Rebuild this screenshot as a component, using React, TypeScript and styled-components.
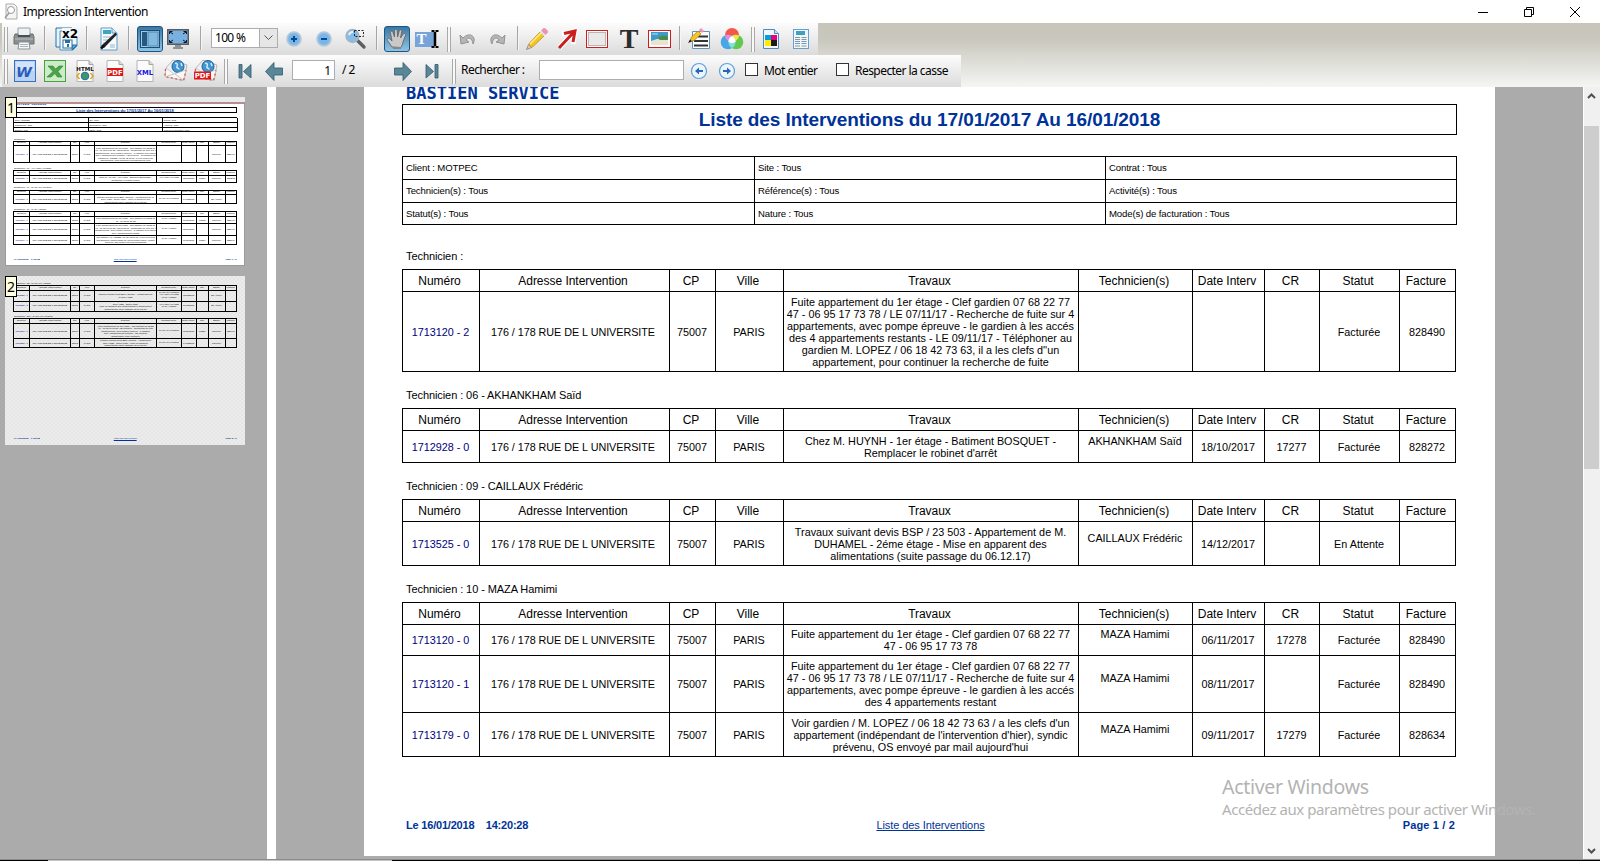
import React from "react";
import styled, { createGlobalStyle, css } from "styled-components";

const Global = createGlobalStyle`
  *, *::before, *::after { box-sizing: border-box; }
  body { margin: 0; background: #ababab; overflow: hidden; }
`;

const ui = `"Noto Sans", "Open Sans", sans-serif`;
const arial = `"Liberation Sans", Arial, sans-serif`;

/* ---------- window chrome ---------- */

const Window = styled.div`
  position: relative;
  width: 1600px;
  height: 861px;
  display: flex;
  flex-direction: column;
  overflow: hidden;
  font-family: ${ui};
  color: #000;
`;

const TitleBar = styled.header`
  height: 23px;
  flex: none;
  display: flex;
  align-items: center;
  background: #fff;
  padding: 0 2px 0 4px;
  font-size: 12px;
  letter-spacing: -0.5px;
`;

const TitleText = styled.span`
  margin-left: 5px;
  flex: 1;
  line-height: 22px;
  padding-top: 1px;
`;

const WindowButton = styled.div`
  width: 46px;
  height: 20px;
  display: flex;
  align-items: center;
  justify-content: center;
`;

const ToolArea = styled.div`
  height: 64px;
  flex: none;
  display: flex;
  flex-direction: column;
  align-items: flex-start;
  padding-left: 2px;
  background: linear-gradient(#c8c5ba 0, #c9c8be 26%, #f5f5f3 100%);
`;

const ToolRow = styled.div<{ $w: number }>`
  width: ${(p) => p.$w}px;
  height: 32px;
  display: flex;
  align-items: center;
  background: linear-gradient(#fcfcfc, #dbdbdb);
`;

const Item = styled.div<{ $gap: number; $w: number }>`
  flex: none;
  margin-left: ${(p) => p.$gap}px;
  width: ${(p) => p.$w}px;
  display: flex;
  align-items: center;
  justify-content: center;
  svg { display: block; flex: none; }
`;

const Separator = styled.i<{ $gap: number }>`
  flex: none;
  margin-left: ${(p) => p.$gap}px;
  width: 2px;
  height: 24px;
  margin-bottom: 2px;
  border-left: 1px solid #a5a5a5;
  border-right: 1px solid #f6f6f6;
`;

const Handle = styled.i<{ $gap: number }>`
  flex: none;
  margin-left: ${(p) => p.$gap}px;
  width: 4px;
  height: 25px;
  border: solid #a9a9a9;
  border-width: 0 1px;
  background: #f8f8f8;
`;

const Pressed = styled.div`
  width: 26px;
  height: 26px;
  border: 1px solid #1c557f;
  border-radius: 3px;
  background: linear-gradient(#3a78a4, #8fc4e6);
  display: flex;
  align-items: center;
  justify-content: center;
`;

const Combo = styled.div<{ $gap: number }>`
  margin-left: ${(p) => p.$gap}px;
  width: 67px;
  height: 20px;
  margin-bottom: 2px;
  border: 1px solid #abadb3;
  background: #fff;
  display: flex;
  font-size: 12px;
  line-height: 18px;
`;
const ComboValue = styled.span`
  flex: 1;
  padding-left: 3px;
  letter-spacing: -0.7px;
`;
const ComboArrow = styled.span`
  width: 19px;
  border: 1px solid #adadad;
  margin: -1px;
  background: #e6e6e6;
  display: flex;
  align-items: center;
  justify-content: center;
`;

const Field = styled.div<{ $gap: number; $w: number }>`
  flex: none;
  margin-left: ${(p) => p.$gap}px;
  margin-bottom: 2px;
  width: ${(p) => p.$w}px;
  height: 20px;
  border: 1px solid #abadb3;
  background: #fff;
  text-align: right;
  padding-right: 3px;
  font-size: 12px;
  line-height: 19px;
`;

const Label = styled.span<{ $gap: number; $w: number; $up?: number }>`
  flex: none;
  margin-left: ${(p) => p.$gap}px;
  width: ${(p) => p.$w}px;
  margin-bottom: ${(p) => p.$up ?? 2}px;
  font-size: 12px;
  line-height: 18px;
  white-space: nowrap;
  letter-spacing: -0.55px;
`;

const CheckBox = styled.i<{ $gap: number }>`
  flex: none;
  margin: 0 0 3px ${(p) => p.$gap}px;
  width: 13px;
  height: 13px;
  border: 1px solid #333;
  background: #fff;
`;

/* ---------- body ---------- */

const Body = styled.main`
  flex: none;
  height: 772px;
  display: flex;
  background: #ababab;
`;

const Thumbs = styled.aside`
  width: 267px;
  padding: 10px 5px 0;
  display: flex;
  flex-direction: column;
  gap: 10px;
`;

const Splitter = styled.div`
  width: 9px;
  background: #fff;
`;

const Viewer = styled.section`
  flex: 1;
  overflow: hidden;
  padding-left: 88px;
`;

const ViewerPage = styled.div`
  margin-top: -28px;
  width: 1131px;
`;

const hatch = `repeating-conic-gradient(#e6e6e6 0 25%, #ececec 0 50%) 0 0 / 4px 4px`;

const ThumbFrame = styled.div<{ $shade?: boolean }>`
  position: relative;
  width: 240px;
  height: 169px;
  overflow: hidden;
  ${(p) => p.$shade && css`background: ${hatch};`}
`;

const Shrink = styled.div`
  zoom: 0.2122;
  --line: 4.7px;
`;

const OutOfView = styled.div`
  position: absolute;
  inset: 0 0 auto 0;
  height: 5px;
  background: ${hatch};
`;

const InView = styled.div`
  position: absolute;
  inset: 5px 0 0 0;
  border: 1px solid #9b9b9b;
  border-top: 2px solid #b58f8f;
`;

const PageTag = styled.span`
  position: absolute;
  left: 0;
  top: 0;
  width: 12px;
  height: 21px;
  border: 1px solid #000;
  background: #ffffe1;
  font-size: 14px;
  line-height: 19px;
  text-align: center;
`;

const ScrollBar = styled.div`
  width: 17px;
  border-left: 1px solid #fff;
  background: #f0f0f0;
  display: flex;
  flex-direction: column;
  align-items: center;
  padding: 5px 1px 4px 0;
  svg { display: block; flex: none; }
`;
const ScrollThumb = styled.div`
  width: 15px;
  height: 343px;
  margin-top: 26px;
  margin-bottom: auto;
  background: #cdcdcd;
`;

const BottomEdge = styled.footer`
  flex: none;
  height: 2px;
  border-top: 1px solid #8c8c8c;
  background: linear-gradient(90deg, #000 48px, #c4c4c4 48px 392px, #000 392px);
`;

/* ---------- report ---------- */

const Sheet = styled.article<{ $clear?: boolean }>`
  width: 1131px;
  height: 797px;
  padding: 0 38px;
  background: ${(p) => (p.$clear ? "transparent" : "#fff")};
  font-family: ${arial};
  display: flex;
  flex-direction: column;
`;

const Company = styled.div`
  height: 45px;
  flex: none;
  padding: 24px 0 0 4px;
  font: bold 17px/20px "DejaVu Sans Mono", monospace;
  color: #039;
  white-space: nowrap;
`;

const Heading = styled.h1`
  flex: none;
  margin: 0 0 21px;
  width: 1055px;
  height: 31px;
  border: 1px solid #000;
  color: #039;
  font-size: 19px;
  line-height: 29px;
  text-align: center;
  letter-spacing: -0.09px;
`;

const Filters = styled.div`
  flex: none;
  width: 1055px;
  display: grid;
  grid-template-columns: 352px 351px 351px;
  grid-template-rows: 23px 23px 22px;
  border: solid #000;
  border-width: 1px 0 0 1px;
  margin-top: calc(1px - var(--line, 1px));
  margin-bottom: 25px;
`;
const Filter = styled.div`
  border: solid #000;
  border-width: 0 1px 1px 0;
  padding-left: 3px;
  font-size: 9.6px;
  letter-spacing: -0.13px;
  line-height: 22px;
  white-space: nowrap;
`;

const Group = styled.section`
  flex: none;
  padding-bottom: 17px;
`;

const GroupLabel = styled.div`
  height: 19px;
  padding-left: 4px;
  font-size: 11px;
  line-height: 13px;
  letter-spacing: -0.08px;
  white-space: nowrap;
`;

const Grid = styled.div`
  width: 1054px;
  border: solid #000;
  border-width: 1px 0 0 1px;
  margin-top: calc(1px - var(--line, 1px));
`;

const Row = styled.div<{ $h: number }>`
  display: grid;
  grid-template-columns: 77px 190px 46px 68px 295px 114px 72px 55px 80px 56px;
  height: ${(p) => p.$h}px;
`;

const Cell = styled.div<{ $head?: boolean; $blue?: boolean; $raised?: boolean; $tight?: boolean }>`
  border: solid #000;
  border-width: 0 1px 1px 0;
  display: flex;
  align-items: center;
  justify-content: center;
  text-align: center;
  white-space: pre;
  font-size: 10.8px;
  line-height: 12px;
  padding-right: 1px;
  ${(p) => p.$head && css`font-size: 12px; padding-top: 1px; padding-right: 3px; letter-spacing: -0.03px;`}
  ${(p) => p.$blue && css`color: #000080;`}
  ${(p) => p.$raised && css`padding-bottom: 12px;`}
  ${(p) => p.$tight && css`letter-spacing: -0.04px; padding-right: 3px;`}
`;

const SheetFooter = styled.div`
  flex: none;
  width: 1055px;
  margin-top: auto;
  height: 38px;
  padding: 0 2px 0 4px;
  display: grid;
  grid-template-columns: 1fr 1fr 1fr;
  color: #039;
  font-size: 11px;
  line-height: 14px;
  font-weight: bold;
  white-space: pre;
`;
const FootLeft = styled.span`
  letter-spacing: -0.2px;
`;
const FootCenter = styled.span`
  text-align: center;
  font-weight: normal;
  text-decoration: underline;
  letter-spacing: -0.08px;
`;
const FootRight = styled.span`
  text-align: right;
  letter-spacing: 0.15px;
`;

const Watermark = styled.div`
  position: absolute;
  left: 1222px;
  top: 773px;
  color: #b3b3b3;
  white-space: nowrap;
  pointer-events: none;
`;
const WatermarkTitle = styled.div`
  font-size: 19.5px;
  line-height: 27px;
  letter-spacing: -0.3px;
`;
const WatermarkText = styled.div`
  font-size: 15px;
  line-height: 18px;
  letter-spacing: -0.43px;
`;

type Intervention = [string, string, string, string, string, string, number];
interface TechGroup {
  name: string;
  rows: Intervention[];
}

const page1: TechGroup[] = [
  {
    name: "Technicien :",
    rows: [
      ["1713120 - 2", "Fuite appartement du 1er étage - Clef gardien 07 68 22 77\n47 - 06 95 17 73 78 / LE 07/11/17 - Recherche de fuite sur 4\nappartements, avec pompe épreuve - le gardien à les accés\ndes 4 appartements restants - LE 09/11/17 - Téléphoner au\ngardien M. LOPEZ / 06 18 42 73 63, il a les clefs d''un\nappartement, pour continuer la recherche de fuite", "", "", "", "Facturée|828490", 80],
    ],
  },
  {
    name: "Technicien : 06 - AKHANKHAM Saïd",
    rows: [
      ["1712928 - 0", "Chez M. HUYNH - 1er étage - Batiment BOSQUET -\nRemplacer le robinet d'arrêt", "AKHANKHAM Saïd", "18/10/2017", "17277", "Facturée|828272", 32],
    ],
  },
  {
    name: "Technicien : 09 - CAILLAUX Frédéric",
    rows: [
      ["1713525 - 0", "Travaux suivant devis BSP / 23 503 - Appartement de M.\nDUHAMEL - 2éme étage - Mise en apparent des\nalimentations (suite passage du 06.12.17)", "CAILLAUX Frédéric", "14/12/2017", "", "En Attente|", 44],
    ],
  },
  {
    name: "Technicien : 10 - MAZA Hamimi",
    rows: [
      ["1713120 - 0", "Fuite appartement du 1er étage - Clef gardien 07 68 22 77\n47 - 06 95 17 73 78", "MAZA Hamimi", "06/11/2017", "17278", "Facturée|828490", 31],
      ["1713120 - 1", "Fuite appartement du 1er étage - Clef gardien 07 68 22 77\n47 - 06 95 17 73 78 / LE 07/11/17 - Recherche de fuite sur 4\nappartements, avec pompe épreuve - le gardien à les accés\ndes 4 appartements restant", "MAZA Hamimi", "08/11/2017", "", "Facturée|828490", 57],
      ["1713179 - 0", "Voir gardien / M. LOPEZ / 06 18 42 73 63 / a les clefs d'un\nappartement (indépendant de l'intervention d'hier), syndic\nprévenu, OS envoyé par mail aujourd'hui", "MAZA Hamimi", "09/11/2017", "17279", "Facturée|828634", 44],
    ],
  },
];

const page2: TechGroup[] = [
  {
    name: "Technicien : 12 - CAILLAUX Hamimi",
    rows: [
      ["1713525 - 1", "Travaux suivant devis BSP / 23 503 - Appartement de\nM. DUHAMEL", "CAILLAUX Frédéric\nAKHANKHAM Saïd\nMAZA Hamimi", "18/12/2017", "", "En Attente|", 42],
      ["1713525 - 2", "Travaux suivant devis BSP / 23 503 - Appartement\nDUHAMEL - 2éme étage\nMise en apparent des alimentations et appartement\nalimentations (suite passage du 06.12.17)", "CAILLAUX Frédéric\nAKHANKHAM Saïd\nMAZA Hamimi", "19/12/2017", "", "En Attente|", 57],
    ],
  },
  {
    name: "Technicien : 206 - CAILLAUX Frédéric",
    rows: [
      ["1713120 - 3", "Fuite appartement du 1er étage - Clef gardien 07 68 22\n47 - 06 95 17 73 78 / LE 07/11/17 - Recherche de fuite\nappartements, avec pompe épreuve - le gardien\ndes 4 appartements restants - LE 09/11/17\nappartement, pour continuer", "CAILLAUX Frédéric", "09/11/2017", "17280", "Facturée|828490", 70],
      ["1713525 - 3", "Travaux suivant devis BSP / 23 503 - Appartement\nDUHAMEL - 2éme étage - Mise en apparent\nalimentations (suite passage du 06.12.17)", "CAILLAUX Frédéric", "14/12/2017", "", "Facturée|", 44],
    ],
  },
];

const headers = ["Numéro", "Adresse Intervention", "CP", "Ville", "Travaux", "Technicien(s)", "Date Interv", "CR", "Statut", "Facture"];
const filters = ["Client : MOTPEC", "Site : Tous", "Contrat : Tous", "Technicien(s) : Tous", "Référence(s) : Tous", "Activité(s) : Tous", "Statut(s) : Tous", "Nature : Tous", "Mode(s) de facturation : Tous"];

function Groups({ groups }: { groups: TechGroup[] }) {
  return (
    <>
      {groups.map((g) => (
        <Group key={g.name}>
          <GroupLabel>{g.name}</GroupLabel>
          <Grid>
            <Row $h={22}>
              {headers.map((h) => <Cell key={h} $head>{h}</Cell>)}
            </Row>
            {g.rows.map(([num, work, tech, date, cr, state, h]) => {
              const [statut, facture] = state.split("|");
              return (
                <Row key={num} $h={h}>
                  <Cell $blue>{num}</Cell>
                  <Cell $tight>176 / 178 RUE DE L UNIVERSITE</Cell>
                  <Cell>75007</Cell>
                  <Cell>PARIS</Cell>
                  <Cell>{work}</Cell>
                  <Cell $raised>{tech}</Cell>
                  <Cell>{date}</Cell>
                  <Cell>{cr}</Cell>
                  <Cell>{statut}</Cell>
                  <Cell>{facture}</Cell>
                </Row>
              );
            })}
          </Grid>
        </Group>
      ))}
    </>
  );
}

function FooterLine({ page }: { page: number }) {
  return (
    <SheetFooter>
      <FootLeft>{"Le 16/01/2018    14:20:28"}</FootLeft>
      <FootCenter>Liste des Interventions</FootCenter>
      <FootRight>Page {page} / 2</FootRight>
    </SheetFooter>
  );
}

function FirstPage() {
  return (
    <Sheet>
      <Company>BASTIEN SERVICE</Company>
      <Heading>Liste des Interventions du 17/01/2017 Au 16/01/2018</Heading>
      <Filters>
        {filters.map((f) => <Filter key={f}>{f}</Filter>)}
      </Filters>
      <Groups groups={page1} />
      <FooterLine page={1} />
    </Sheet>
  );
}

const SecondTop = styled.div`
  height: 27px;
  flex: none;
`;

function SecondPage() {
  return (
    <Sheet $clear>
      <SecondTop />
      <Groups groups={page2} />
      <FooterLine page={2} />
    </Sheet>
  );
}

/* ---------- icons ---------- */

const Svg = ({ w, h, children }: { w: number; h: number; children: React.ReactNode }) => (
  <svg width={w} height={h} viewBox={`0 0 ${w} ${h}`} fill="none">{children}</svg>
);

const SvgText = styled.text<{ $size: number; $serif?: boolean; $italic?: boolean }>`
  font-family: ${(p) => (p.$serif ? `"Liberation Serif", serif` : `"DejaVu Sans", sans-serif`)};
  font-weight: bold;
  font-size: ${(p) => p.$size}px;
  font-style: ${(p) => (p.$italic ? "italic" : "normal")};
`;

const Printer = () => (
  <Svg w={24} h={24}>
    <path d="M6 1h12v8H6z" fill="#eef1f3" stroke="#9aa0a3" />
    <path d="M3 7h3v2h12V7h3l1 3v7H2v-7z" fill="#8b9093" stroke="#6b7073" />
    <path d="M6 8h12v2H6z" fill="#4b5053" />
    <path d="M3 12h18" stroke="#b9bec1" />
    <path d="M7 15h10l1 7H6z" fill="#f7f9fa" stroke="#8b9093" />
    <path d="M8 17.500h8M8 19.500h8" stroke="#a4b4b8" />
  </Svg>
);
const CopyX2 = () => (
  <Svg w={24} h={24}>
    <path d="M1 1h16v19H1z" fill="#e8f3fb" stroke="#2473a8" />
    <path d="M5 4h17v15l-4 4H5z" fill="#eef6fc" stroke="#4a90c0" />
    <path d="M22 18l-5 5v-5z" fill="#5aa7da" stroke="#2473a8" />
    <rect x="7" y="1" width="16" height="9" fill="#f3f6f8" />
    <SvgText $size={12} x="7" y="11" fill="#000">x2</SvgText>
    <rect x="8" y="13" width="9" height="8" fill="#fff" stroke="#2a6fa0" />
    <path d="M10 13h5v3h-5zM12 17h2v3h-2z" fill="#2a6fa0" />
  </Svg>
);
const EditPage = () => (
  <Svg w={22} h={24}>
    <path d="M3 1h11l5 5v17H3z" fill="#f5fafd" stroke="#5b9bc9" />
    <path d="M14 1v5h5" fill="#cfe4f3" stroke="#5b9bc9" />
    <path d="M5 3h8v4H5z" fill="#3fa3c4" />
    <path d="M5 10h10M5 13h7M5 16h4M12 18h5M12 20h5" stroke="#9ab4c4" />
    <path d="M3 19L17.500 5.500l1.500 2L6 21z" fill="#222" />
    <path d="M3 21.500l3-3" stroke="#111" strokeWidth="2.500" />
  </Svg>
);
const PanelIcon = () => (
  <Svg w={20} h={18}>
    <rect x=".5" y=".5" width="19" height="17" fill="#9fcbea" stroke="#1a4c74" />
    <rect x="2" y="2" width="5" height="14" fill="#27587f" />
    <rect x="8" y="2" width="10" height="14" fill="#84b8dc" stroke="#4e8ab3" />
  </Svg>
);
const ScreenIcon = () => (
  <Svg w={22} h={24}>
    <rect x="0" y="2" width="22" height="16" fill="#565e64" />
    <rect x="1.500" y="3.500" width="19" height="13" fill="#78b0e0" />
    <path d="M2.500 7V4.500h3M16.500 4.500h3V7M19.500 13v2.500h-3M5.500 15.500h-3V13M3 5l3 2M19 5l-3 2M3 15l3-2M19 15l-3-2" stroke="#112" />
    <path d="M8 18h6v3H8zM6 20h10v2H6z" fill="#8c9296" />
  </Svg>
);
const Round = ({ minus }: { minus?: boolean }) => (
  <Svg w={16} h={16}>
    <circle cx="8" cy="8" r="7" fill="#8cc0ea" stroke="#b7c8d6" strokeWidth="1.600" />
    <circle cx="8" cy="8" r="5.600" fill="#78b6ea" />
    <path d={minus ? "M5 8h6" : "M5 8h6M8 5v6"} stroke="#0c4a8e" strokeWidth="2" />
  </Svg>
);
const Loupe = () => (
  <Svg w={22} h={22}>
    <path d="M12 12l7 7" stroke="#5c5f62" strokeWidth="3.400" strokeLinecap="round" />
    <circle cx="7.500" cy="8" r="6.200" fill="#86bce8" stroke="#a4b6c4" strokeWidth="2" />
    <path d="M4 7a4 4 0 014-3" stroke="#e4f3fd" strokeWidth="2" />
    <rect x="9.500" y="2.500" width="9" height="6" stroke="#222" strokeDasharray="2 1.500" />
  </Svg>
);
const Hand = () => (
  <Svg w={22} h={22}>
    <path d="M6 19L1.500 12.500c-1-2 1-3 2.500-1.500l2 2L4.500 5c-.3-2 2-2.400 2.500-.6L8.500 9V3c0-2 2.600-2 2.800 0l.3 6 1.600-6c.6-1.800 2.800-1.200 2.500.6L14.500 10l2.700-4c1-1.400 3-.4 2.300 1.300L17 14c-.4 2-.9 4-2 5.500z" fill="#c9c9c9" stroke="#666" strokeWidth=".9" />
    <path d="M7 20h8" stroke="#888" strokeWidth="2" />
  </Svg>
);
const TextSelect = () => (
  <Svg w={26} h={22}>
    <rect x="0" y="4" width="20" height="15" fill="#76a4d8" />
    <SvgText $size={15} $serif x="1.5" y="16" fill="#fff">T</SvgText>
    <path d="M16.500 3h3M20.500 3h3M16.500 19h3M20.500 19h3" stroke="#000" strokeWidth="2" />
    <path d="M20 4v14" stroke="#000" strokeWidth="2.500" />
  </Svg>
);
const Undo = ({ flip }: { flip?: boolean }) => (
  <svg width="20" height="16" viewBox="0 0 20 16" fill="none">
    <path transform={flip ? "matrix(-1 0 0 1 20 0)" : undefined} d="M2 4l1 9 8-2-3-2c2-3 6-3 7 4 4-7-3-13-10-6z" fill="#b6b6b6" stroke="#929292" />
  </svg>
);
const Pencil = () => (
  <Svg w={24} h={24}>
    <path d="M2 22l2.500-6L15 5l4 4L8 19.500z" fill="#f7c51d" stroke="#b98b25" strokeWidth=".8" />
    <path d="M5 17L16 6" stroke="#fff08a" strokeWidth="1.500" />
    <path d="M16.500 3.500l2-2c1-1 5 2.500 4 4l-2 2z" fill="#f48fb6" stroke="#d98aa8" strokeWidth=".6" />
    <path d="M15.500 4.500l4 4" stroke="#e0e0e0" strokeWidth="2" />
    <path d="M1.500 22.500l2-5 3 3z" fill="#e9c9a0" stroke="#777" strokeWidth=".6" />
  </Svg>
);
const RedArrow = () => (
  <Svg w={22} h={22}>
    <path d="M2 20L15 6M5 6l13-3-2 13" stroke="#fff" strokeWidth="5" />
    <path d="M2 20L16 5M7 5.500l11-2.500-2 11" stroke="#c9201f" strokeWidth="3" />
  </Svg>
);
const RedRect = () => (
  <Svg w={24} h={22}>
    <rect x="1.500" y="2.500" width="21" height="17" stroke="#c9201f" />
    <rect x="2.500" y="3.500" width="19" height="15" stroke="#fff" />
    <rect x="3.500" y="4.500" width="17" height="13" fill="#e9e9e9" stroke="#b8b8b8" />
  </Svg>
);
const BigT = () => (
  <Svg w={20} h={32}>
    <SvgText $size={28} $serif x="10" y="25" textAnchor="middle" fill="#2c2c2c">T</SvgText>
  </Svg>
);
const Picture = () => (
  <Svg w={25} h={22}>
    <rect x="1.500" y="2.500" width="22" height="17" fill="#fff" stroke="#c9201f" />
    <rect x="4" y="4" width="17" height="13" fill="#3c9bcd" />
    <path d="M4 13l6-2 11 1v5H4z" fill="#e9e4cf" />
    <path d="M11 10c3-3 7-3 10-1v3h-8z" fill="#4c8b49" />
    <path d="M5 6h6" stroke="#bfe2f3" />
  </Svg>
);
const ListPencil = () => (
  <Svg w={24} h={24}>
    <path d="M4.500 4.500h17v17h-17z" fill="#fff" stroke="#5e94c0" />
    <path d="M10 9.500h10M6 14h14M6 18.500h14" stroke="#333" strokeWidth="2" />
    <path d="M2 14l1.500-4L10 4l3 3-7 6.500z" fill="#f7c51d" stroke="#a8832a" strokeWidth=".8" />
    <path d="M11 3l2-2 3 3-2 2z" fill="#f48fb6" />
    <path d="M0 16l2-3.500 2 2z" fill="#222" />
  </Svg>
);
const Rgb = () => (
  <Svg w={24} h={24}>
    <circle cx="12" cy="8" r="7" fill="#f2594b" />
    <circle cx="8" cy="15" r="7.300" fill="#46a6e6" />
    <circle cx="16" cy="15" r="7.300" fill="#62c94f" />
    <path d="M5 8.500A7.500 7.500 0 0112 9a8 8 0 00-3.500 5C6.500 13 5 11 5 8.500z" fill="#e58be0" />
    <path d="M19 8.500A7.500 7.500 0 0012 9a8 8 0 013.500 5c2-1 3.500-3 3.500-5.500z" fill="#f5e24b" />
    <path d="M12 21a7 7 0 003.500-6 7 7 0 01-7 0A7 7 0 0012 21z" fill="#7fe0e0" />
    <path d="M12 9a7 7 0 013.700 6 7 7 0 01-7.400 0A7 7 0 0112 9z" fill="#fff" />
  </Svg>
);
const Cmyk = () => (
  <Svg w={18} h={22}>
    <path d="M1.500 1.500h11l4 4v15h-15z" fill="#f1f7fb" stroke="#4b8cc0" />
    <path d="M12.500 1.500v4h4" fill="#cde" stroke="#4b8cc0" />
    <rect x="3" y="7" width="6" height="6" fill="#00a0e0" />
    <rect x="9" y="7" width="6" height="6" fill="#e5007d" />
    <rect x="3" y="12" width="6" height="6" fill="#ffec00" />
    <rect x="9" y="12" width="6" height="6" fill="#1b1b1b" />
  </Svg>
);
const DocPreview = () => (
  <Svg w={18} h={22}>
    <rect x="1.500" y="1.500" width="15" height="19" fill="#eef6fb" stroke="#6a9fca" />
    <path d="M4 3h9v4H4z" fill="#3ba0cc" />
    <path d="M6 6h5v1H6z" fill="#5a9a4a" />
    <path d="M3 9.500h5M3 11.500h5M3 13.500h5M9.500 9.500h5M9.500 11.500h5M9.500 13.500h5M3 15.500h5M9.500 15.500h5M3 18h5M9.500 18h5" stroke="#8297a5" />
  </Svg>
);
const Word = () => (
  <Svg w={22} h={23}>
    <rect x=".5" y=".5" width="21" height="21" fill="#b8d2f4" stroke="#3a6fc0" />
    <rect x="2" y="2" width="18" height="9" fill="#e2eefc" opacity=".6" />
    <SvgText $size={14.5} $italic x="2" y="16.5" fill="#2a5db8">W</SvgText>
  </Svg>
);
const Excel = () => (
  <Svg w={22} h={23}>
    <rect x=".5" y=".5" width="21" height="21" fill="#cdebc9" stroke="#46a23f" />
    <path d="M4 6h5l2.500 3L15 6h4l-5 5.500 4 5.500h-4.500L11 13.500 7 17H3l6-5.500z" fill="#4ba547" stroke="#2a7f30" strokeWidth=".6" />
  </Svg>
);
const FileIcon = ({ label, color, band }: { label: string; color: string; band?: string }) => (
  <Svg w={18} h={23}>
    <path d="M1 .5h12l4 4v17H1z" fill="#fbfbfb" stroke="#b4b4b4" />
    <path d="M13 .5v4h4" fill="#d8d8d8" stroke="#a5a5a5" />
    {band && <rect x="1" y="8" width="16" height="8" fill={band} />}
    {label === "HTML" && (
      <g>
        <circle cx="9" cy="16" r="3.800" fill="#3a9a60" stroke="#2468b0" />
        <path d="M3.500 13l-2.500 3 2.500 3M14.500 13l2.500 3-2.500 3" stroke="#d9a520" strokeWidth="1.500" />
      </g>
    )}
    <SvgText $size={label === "HTML" ? 5.5 : 6.8} x="9" y={label === "HTML" ? 10.5 : 14.5} textAnchor="middle" fill={color}>{label}</SvgText>
  </Svg>
);
const Mail = ({ pdf }: { pdf?: boolean }) => (
  <Svg w={24} h={24}>
    <path d="M2 9L9 1l14 5-3 15L1 17z" fill="#eef2f5" stroke="#aaa" strokeWidth=".8" />
    <circle cx="14" cy="7.500" r="6" fill="#4295cf" stroke="#1d5c94" />
    <path d="M11 4.500c2-1 3 1 2 3s2 1 2 3M17 4l1 3" stroke="#d2ecfa" strokeWidth="1.500" />
    <path d="M2 9l8 6 12-4-2 10.500L1 17.500z" fill="#f8f8f8" stroke="#b0b0b0" strokeWidth=".6" />
    <path d="M1.500 10L1 17.500l18.500 4 2.500-10" stroke="#d8625a" strokeWidth="1.400" strokeDasharray="2 2.500" />
    <path d="M10 15l-8 2.500M11 15l8 6" stroke="#c4c4c4" />
    {pdf && (
      <g>
        <rect x="0" y="12.500" width="17" height="8" fill="#e01515" />
        <SvgText $size={7} x="8.5" y="19.1" textAnchor="middle" fill="#fff">PDF</SvgText>
      </g>
    )}
  </Svg>
);
const Nav = ({ dir, edge }: { dir: "l" | "r"; edge?: boolean }) => (
  <svg width="18" height="20" viewBox="0 0 18 20">
    <g transform={dir === "l" ? "matrix(-1 0 0 1 18 0)" : undefined} fill="#5a8698" stroke="#2f5b6a" strokeWidth=".8">
      {edge ? <path d="M3 3.500l7.500 7L3 17zM12 3.500h3V17h-3z" /> : <path d="M.5 7H9V1.500L17.500 10.500 9 19.500V14H.5z" />}
    </g>
  </svg>
);
const CircleArrow = ({ back }: { back?: boolean }) => (
  <Svg w={18} h={18}>
    <circle cx="9" cy="9" r="7.500" fill="#eaf5fd" stroke="#5f9fd3" strokeWidth="1.200" />
    <path transform={back ? "matrix(-1 0 0 1 18 0)" : undefined} d="M5 8h4V5.500L13 9l-4 3.500V10H5z" fill="#2468b4" />
  </Svg>
);
const Chevron = ({ d }: { d: string }) => (
  <Svg w={9} h={8}><path d={d} stroke="#505050" strokeWidth="2" /></Svg>
);

/* ---------- page ---------- */

export default function App() {
  return (
    <Window>
      <Global />
      <TitleBar>
        <Svg w={14} h={17}>
          <path d="M2 1h8l3 3v12H2z" fill="#f6f6f6" stroke="#aaa" />
          <circle cx="7" cy="7" r="3.500" fill="#fff" stroke="#999" />
          <path d="M5 10l-4 5" stroke="#999" strokeWidth="1.500" />
        </Svg>
        <TitleText>Impression Intervention</TitleText>
        <WindowButton><Svg w={10} h={10}><path d="M0 5.500h10" stroke="#000" /></Svg></WindowButton>
        <WindowButton>
          <Svg w={10} h={10}><path d="M.5 2.500h7v7h-7zM2.500 2.500v-2h7v7h-2" stroke="#000" /></Svg>
        </WindowButton>
        <WindowButton><Svg w={10} h={10}><path d="M0 0l10 10M10 0L0 10" stroke="#000" /></Svg></WindowButton>
      </TitleBar>

      <ToolArea>
        <ToolRow $w={816}>
          <Handle $gap={2} />
          <Item $gap={4} $w={24}><Printer /></Item>
          <Separator $gap={8} />
          <Item $gap={9} $w={24}><CopyX2 /></Item>
          <Separator $gap={7} />
          <Item $gap={10} $w={22}><EditPage /></Item>
          <Separator $gap={8} />
          <Item $gap={7} $w={26}><Pressed><PanelIcon /></Pressed></Item>
          <Item $gap={4} $w={22}><ScreenIcon /></Item>
          <Separator $gap={11} />
          <Combo $gap={9}>
            <ComboValue>100 %</ComboValue>
            <ComboArrow><Svg w={9} h={6}><path d="M.5.5l4 4 4-4" stroke="#555" /></Svg></ComboArrow>
          </Combo>
          <Item $gap={8} $w={16}><Round /></Item>
          <Item $gap={14} $w={16}><Round minus /></Item>
          <Item $gap={13} $w={22}><Loupe /></Item>
          <Separator $gap={9} />
          <Item $gap={6} $w={26}><Pressed><Hand /></Pressed></Item>
          <Item $gap={5} $w={26}><TextSelect /></Item>
          <Handle $gap={6} />
          <Item $gap={7} $w={20}><Undo /></Item>
          <Item $gap={9} $w={20}><Undo flip /></Item>
          <Separator $gap={10} />
          <Item $gap={6} $w={24}><Pencil /></Item>
          <Item $gap={8} $w={22}><RedArrow /></Item>
          <Item $gap={6} $w={24}><RedRect /></Item>
          <Item $gap={10} $w={20}><BigT /></Item>
          <Item $gap={8} $w={25}><Picture /></Item>
          <Separator $gap={7} />
          <Item $gap={7} $w={24}><ListPencil /></Item>
          <Item $gap={8} $w={24}><Rgb /></Item>
          <Handle $gap={7} />
          <Item $gap={7} $w={18}><Cmyk /></Item>
          <Item $gap={12} $w={18}><DocPreview /></Item>
        </ToolRow>
        <ToolRow $w={959}>
          <Handle $gap={2} />
          <Item $gap={6} $w={22}><Word /></Item>
          <Item $gap={8} $w={22}><Excel /></Item>
          <Item $gap={10} $w={18}><FileIcon label="HTML" color="#111" /></Item>
          <Item $gap={12} $w={18}><FileIcon label="PDF" color="#fff" band="#e01515" /></Item>
          <Item $gap={12} $w={18}><FileIcon label="XML" color="#1717e0" /></Item>
          <Item $gap={10} $w={24}><Mail /></Item>
          <Item $gap={6} $w={24}><Mail pdf /></Item>
          <Handle $gap={6} />
          <Item $gap={8} $w={18}><Nav dir="l" edge /></Item>
          <Item $gap={11} $w={18}><Nav dir="l" /></Item>
          <Field $gap={9} $w={43}>1</Field>
          <Label $gap={7} $w={20}>/ 2</Label>
          <Item $gap={32} $w={18}><Nav dir="r" /></Item>
          <Item $gap={11} $w={18}><Nav dir="r" edge /></Item>
          <Handle $gap={11} />
          <Label $gap={5} $w={66} $up={3}>Rechercher :</Label>
          <Field $gap={12} $w={145} />
          <Item $gap={6} $w={18}><CircleArrow back /></Item>
          <Item $gap={10} $w={18}><CircleArrow /></Item>
          <CheckBox $gap={9} />
          <Label $gap={6} $w={60} $up={1}>Mot entier</Label>
          <CheckBox $gap={12} />
          <Label $gap={6} $w={100} $up={1}>Respecter la casse</Label>
        </ToolRow>
      </ToolArea>

      <Body>
        <Thumbs>
          <ThumbFrame>
            <Shrink><FirstPage /></Shrink>
            <OutOfView />
            <InView />
            <PageTag>1</PageTag>
          </ThumbFrame>
          <ThumbFrame $shade>
            <Shrink><SecondPage /></Shrink>
            <PageTag>2</PageTag>
          </ThumbFrame>
        </Thumbs>
        <Splitter />
        <Viewer>
          <ViewerPage><FirstPage /></ViewerPage>
        </Viewer>
        <ScrollBar>
          <Chevron d="M1 6l3.500-3.500L8 6" />
          <ScrollThumb />
          <Chevron d="M1 2l3.500 3.500L8 2" />
        </ScrollBar>
      </Body>
      <BottomEdge />

      <Watermark>
        <WatermarkTitle>Activer Windows</WatermarkTitle>
        <WatermarkText>Accédez aux paramètres pour activer Windows.</WatermarkText>
      </Watermark>
    </Window>
  );
}
